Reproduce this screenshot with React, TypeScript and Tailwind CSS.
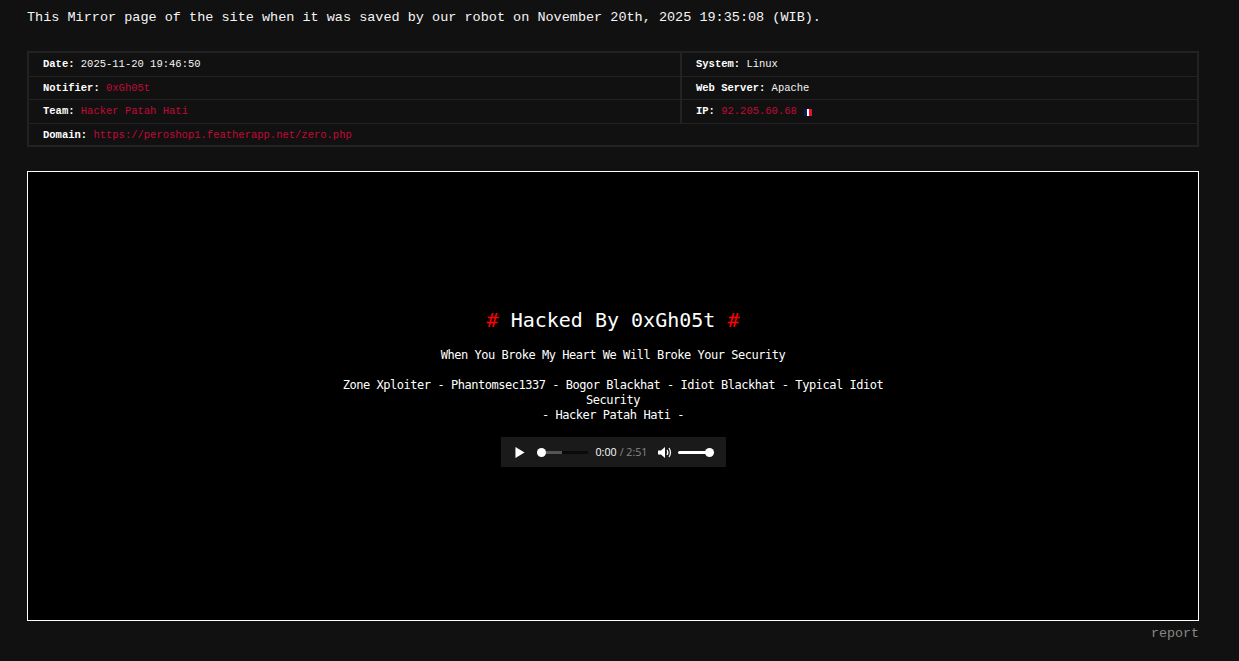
function Row({ label, children, wide }: { label: string; children: React.ReactNode; wide?: boolean }) {
  return (
    <div className={`flex items-center h-full pl-[14px] pt-px ${wide ? "col-span-2" : ""}`}>
      <b className="font-bold text-white mr-[6.3px]">{label}</b>
      {children}
    </div>
  );
}
const red = "text-[#c20a36]";
export default function App() {
  return (
    <div className="min-h-[661px] bg-[#111111] pl-[27px] pr-[40px] pt-[8px] font-['Liberation_Mono',monospace] text-white overflow-hidden">
      <p className="pt-px text-[13.5px] leading-[17px] text-[#f5f5f5]">
        This Mirror page of the site when it was saved by our robot on November 20th, 2025 19:35:08 (WIB).
      </p>
      <div className="mt-[25px] border-2 border-[#222222] text-[10.5px] text-[#f5f5f5] h-[96px] grid grid-cols-[653px_1fr] grid-rows-[24px_23px_24px_21px]">
        <div className="border-r-2 border-b border-[#222222]"><Row label="Date:">2025-11-20 19:46:50</Row></div>
        <div className="border-b border-[#222222]"><Row label="System:">Linux</Row></div>
        <div className="border-r-2 border-b border-[#222222]"><Row label="Notifier:"><span className={red}>0xGh05t</span></Row></div>
        <div className="border-b border-[#222222]"><Row label="Web Server:">Apache</Row></div>
        <div className="border-r-2 border-b border-[#222222]"><Row label="Team:"><span className={red}>Hacker Patah Hati</span></Row></div>
        <div className="border-b border-[#222222]">
          <Row label="IP:">
            <span className={red}>92.205.60.68</span>
            <span className="ml-[7px] flex h-[7px] w-[8px]">
              <span className="flex-1 bg-[#0a1a5c]" />
              <span className="flex-1 bg-white" />
              <span className="flex-1 bg-[#e8102a]" />
            </span>
          </Row>
        </div>
        <div className="col-span-2 pt-px"><Row label="Domain:"><span className={red}>https://peroshop1.featherapp.net/zero.php</span></Row></div>
      </div>
      <div className="mt-[24px] h-[450px] border border-white bg-black flex flex-col items-center justify-center">
        <div className="w-[552px] text-center text-white pb-[17px] font-['DejaVu_Sans_Mono',monospace]">
          <h1 className="text-[20px] leading-[24px]"><span className="text-[#ff0000]">#</span> Hacked By 0xGh05t <span className="text-[#ff0000]">#</span></h1>
          <p className="mt-[16px] text-[12px] leading-[15px] tracking-[-0.47px]">When You Broke My Heart We Will Broke Your Security</p>
          <p className="mt-[15px] text-[12px] leading-[15px] tracking-[-0.47px]">
            Zone Xploiter - Phantomsec1337 - Bogor Blackhat - Idiot Blackhat - Typical Idiot Security
            <br />- Hacker Patah Hati -
          </p>
          <div className="mx-auto mt-[14px] h-[30px] w-[225px] bg-[#1a1a1a] flex items-center font-['Open_Sans',sans-serif] text-[10.7px]">
            <svg viewBox="0 0 10 12" className="ml-[14px] h-[11px] w-[10px] fill-white"><path d="M0 0 L10 6 L0 12 Z" /></svg>
            <div className="ml-[12px] relative h-[3px] w-[51px] bg-[#0a0a0a]">
              <div className="h-full w-[25px] bg-[#555555]" />
              <div className="absolute left-0 top-[-3px] h-[9px] w-[9px] rounded-full bg-white" />
            </div>
            <span className="ml-[8px] text-white">0:00</span>
            <span className="ml-[3px] text-[#888888]">/ 2:51</span>
            <svg viewBox="0 0 14 12" className="ml-[11px] h-[13px] w-[14px]">
              <path d="M0 4 H3 L7 0.5 V11.5 L3 8 H0 Z" fill="#fff" />
              <path d="M9 3.5 Q10.8 6 9 8.5" stroke="#fff" strokeWidth="1.2" fill="none" />
              <path d="M11 1.5 Q14 6 11 10.5" stroke="#fff" strokeWidth="1.2" fill="none" />
            </svg>
            <div className="ml-[6px] relative h-[3px] w-[36px] rounded-full bg-white">
              <div className="absolute right-0 top-[-3px] h-[9px] w-[9px] rounded-full bg-white" />
            </div>
          </div>
        </div>
      </div>
      <div className="mt-[4px] text-right text-[13.33px] leading-[17px] text-[#888888]">report</div>
    </div>
  );
}
